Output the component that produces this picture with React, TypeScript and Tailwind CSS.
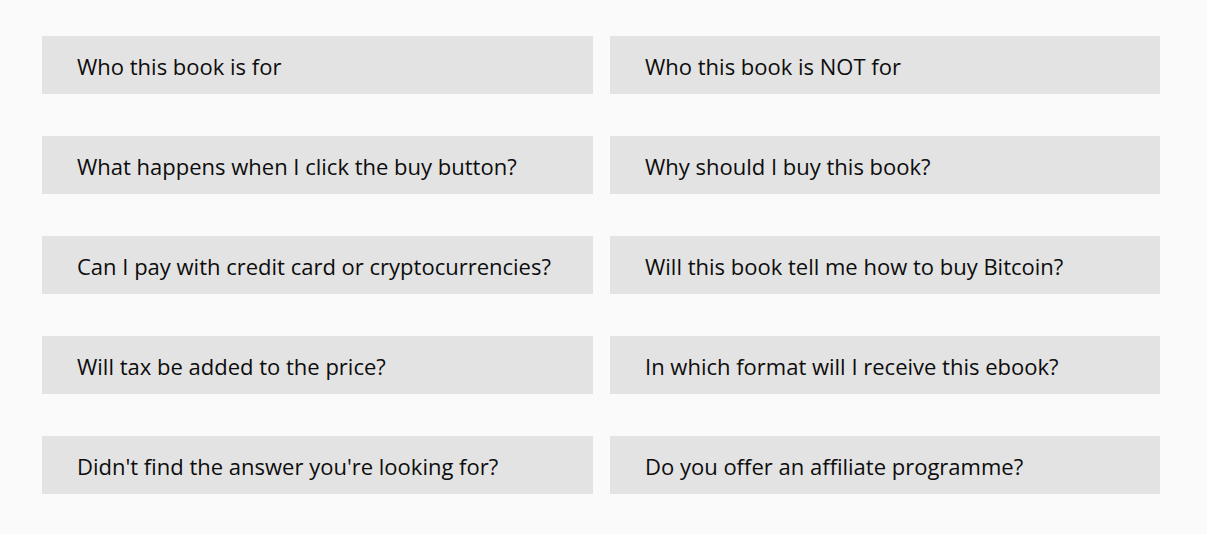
import React from "react";

const items = [
  "Who this book is for",
  "Who this book is NOT for",
  "What happens when I click the buy button?",
  "Why should I buy this book?",
  "Can I pay with credit card or cryptocurrencies?",
  "Will this book tell me how to buy Bitcoin?",
  "Will tax be added to the price?",
  "In which format will I receive this ebook?",
  "Didn't find the answer you're looking for?",
  "Do you offer an affiliate programme?",
];

export default function App() {
  return (
    <div className="min-h-[534px] w-full bg-[#fafafa] pt-[36px] pl-[42px] pb-[40px] font-['Open_Sans',sans-serif]">
      <div className="grid grid-cols-[551px_550px] gap-x-[17px] gap-y-[42px]">
        {items.map((t) => (
          <div
            key={t}
            className="flex h-[58px] items-center bg-[#e3e3e3] pl-[35px] pt-[1px] text-[22px] leading-none text-[#0d0d0d]"
          >
            {t}
          </div>
        ))}
      </div>
    </div>
  );
}
